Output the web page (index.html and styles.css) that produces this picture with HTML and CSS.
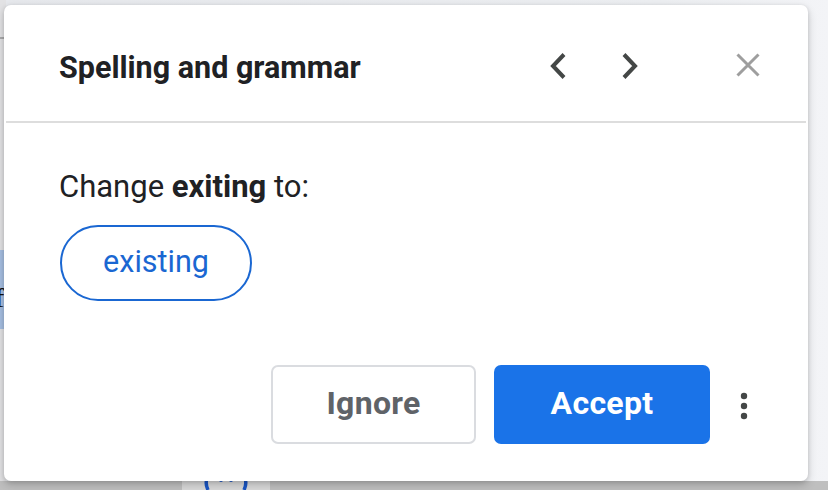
FILE: index.html
```html
<!DOCTYPE html>
<html lang="en">
<head>
<meta charset="utf-8">
<title>Spelling and grammar</title>
<link rel="stylesheet" href="styles.css">
</head>
<body>
<div class="backdrop">
  <div class="doc-left">
    <div class="doc-rule"></div>
    <div class="doc-highlight"><span class="doc-glyph">f</span></div>
  </div>
  <div class="doc-bottom">
    <div class="doc-tile">
      <svg class="doc-icon" width="44" height="12" viewBox="0 0 44 12"><path d="M3 0 Q1 6 4 12" fill="none" stroke="#1a56c4" stroke-width="3.5"/><path d="M41 0 Q43 6 40 12" fill="none" stroke="#1a56c4" stroke-width="3.5"/><circle cx="17" cy="2" r="2" fill="#1a56c4"/><circle cx="27" cy="2" r="2" fill="#1a56c4"/></svg>
    </div>
  </div>
</div>

<div class="dialog">
  <div class="dialog-header">
    <h1 class="title">Spelling and grammar</h1>
    <div class="nav">
      <button class="icon-btn" aria-label="Previous">
        <svg width="18" height="28" viewBox="0 0 18 28"><path d="M15 2.5 L4 14 L15 25.5" fill="none" stroke="#444746" stroke-width="4"/></svg>
      </button>
      <button class="icon-btn" aria-label="Next">
        <svg width="18" height="28" viewBox="0 0 18 28"><path d="M3 2.5 L14 14 L3 25.5" fill="none" stroke="#444746" stroke-width="4"/></svg>
      </button>
    </div>
    <button class="icon-btn close" aria-label="Close">
      <svg width="24" height="24" viewBox="0 0 24 24"><path d="M1.5 1.5 L22.5 22.5 M22.5 1.5 L1.5 22.5" fill="none" stroke="#9e9e9e" stroke-width="3"/></svg>
    </button>
  </div>
  <div class="dialog-body">
    <p class="prompt">Change <b>exiting</b> to:</p>
    <button class="suggestion">existing</button>
  </div>
  <div class="dialog-actions">
    <button class="btn btn-outline">Ignore</button>
    <button class="btn btn-primary">Accept</button>
    <button class="icon-btn more" aria-label="More options">
      <svg width="10" height="28" viewBox="0 0 10 28"><circle cx="5" cy="4" r="3.2" fill="#444746"/><circle cx="5" cy="14" r="3.2" fill="#444746"/><circle cx="5" cy="24" r="3.2" fill="#444746"/></svg>
    </button>
  </div>
</div>
</body>
</html>
```

FILE: styles.css
```css
* { box-sizing: border-box; }
html, body { margin: 0; padding: 0; }
body {
  width: 828px;
  height: 490px;
  overflow: hidden;
  background: linear-gradient(90deg, #e6e8ec 0%, #eceef1 80%, #f3f4f7 100%);
  font-family: Roboto, "Noto Sans", Arial, sans-serif;
  position: relative;
}

.backdrop {
  width: 828px;
  height: 490px;
  display: flex;
  flex-direction: column;
}
.doc-left {
  width: 6px;
  height: 481px;
  background: #e2e2e4;
  display: flex;
  flex-direction: column;
}
.doc-rule {
  margin-top: 37px;
  height: 2px;
  background: #a9a9ab;
}
.doc-highlight {
  margin-top: 211px;
  height: 79px;
  background: #a6bfe2;
  overflow: hidden;
  display: flex;
  align-items: center;
}
.doc-glyph {
  font-family: "Liberation Serif", serif;
  font-size: 28px;
  color: #111;
  margin-left: -5px;
  margin-top: 16px;
}
.doc-bottom {
  height: 9px;
  background: #bfbfbf;
  display: flex;
}
.doc-tile {
  margin-left: 182px;
  width: 88px;
  background: #d9d9d9;
  display: flex;
  align-items: flex-end;
  justify-content: center;
}
.doc-icon { display: block; }

.dialog {
  position: absolute;
  left: 4px;
  top: 5px;
  width: 804px;
  height: 476px;
  background: #fff;
  border-radius: 7px;
  box-shadow: 0 4px 10px rgba(0,0,0,0.18), 0 1px 4px rgba(0,0,0,0.12);
  display: flex;
  flex-direction: column;
}

.dialog-header {
  height: 118px;
  display: flex;
  align-items: center;
  padding: 0 46px 0 53px;
  border-bottom: 2px solid #dddddd;
  margin: 0 2px;
}
.title {
  margin: 0;
  font-size: 30.5px;
  font-weight: 700;
  color: #202124;
  letter-spacing: 0;
  flex: 1;
  padding-top: 8px;
  white-space: nowrap;
}
.nav {
  display: flex;
  gap: 54px;
  margin-right: 97px;
  padding-top: 6px;
}
.icon-btn {
  border: 0;
  background: none;
  padding: 0;
  display: flex;
  align-items: center;
  justify-content: center;
  cursor: pointer;
}
.close { padding-top: 4px; }

.dialog-body {
  padding: 46px 0 0 55px;
  flex: 1;
}
.prompt {
  margin: 0;
  font-size: 31px;
  color: #202124;
  line-height: 36px;
  white-space: nowrap;
}
.prompt b { font-weight: 700; }
.suggestion {
  margin-top: 20px;
  height: 76px;
  width: 192px;
  border: 2px solid #1a67d2;
  border-radius: 38px;
  background: #fff;
  color: #1a67d2;
  font-family: inherit;
  font-size: 30.5px;
  padding: 0 0 4px;
  display: flex;
  align-items: center;
  justify-content: center;
  margin-left: 1px;
}

.dialog-actions {
  display: flex;
  align-items: center;
  justify-content: flex-end;
  padding: 0 59px 37px 0;
  gap: 18px;
}
.btn {
  height: 79px;
  border-radius: 7px;
  font-family: inherit;
  font-size: 32px;
  font-weight: 700;
  letter-spacing: 0.3px;
  padding: 0 0 4px;
}
.btn-outline {
  width: 205px;
  background: #fff;
  border: 2px solid #dadce0;
  color: #5f6368;
}
.btn-primary {
  width: 216px;
  background: #1a73e8;
  border: 0;
  color: #fff;
}
.more {
  margin-left: 11px;
  padding-top: 2px;
}
```
